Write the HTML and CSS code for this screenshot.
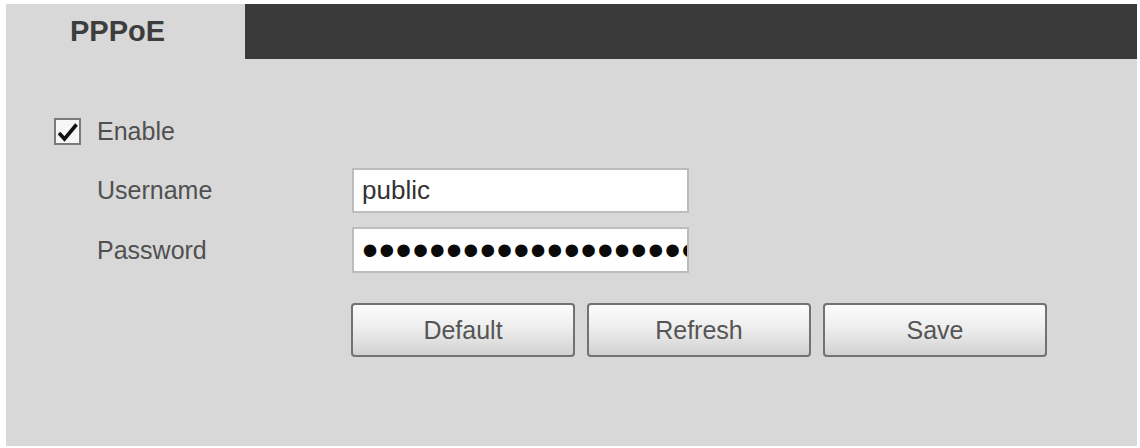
FILE: index.html
```html
<!DOCTYPE html>
<html>
<head>
<meta charset="utf-8">
<link rel="stylesheet" href="styles.css">
</head>
<body>
<div class="panel">
  <div class="tabs">
    <div class="tab">PPPoE</div>
    <div class="tab-bar"></div>
  </div>
  <div class="content">
    <label class="enable">
      <span class="check">
        <svg width="23" height="23" viewBox="0 0 23 23"><path d="M3 13 L8.5 19 L20.5 4.5" fill="none" stroke="#111" stroke-width="3.6" stroke-linejoin="miter" stroke-linecap="butt"/></svg>
      </span>
      <span class="enable-text">Enable</span>
    </label>
    <div class="fields">
      <div class="label">Username</div>
      <input class="field" type="text" value="public">
      <div class="label">Password</div>
      <input class="field pw" type="password" value="passwordpasswordpassword">
    </div>
    <div class="buttons">
      <button class="btn">Default</button>
      <button class="btn">Refresh</button>
      <button class="btn">Save</button>
    </div>
  </div>
</div>
</body>
</html>
```
FILE: styles.css
```css
html, body {
  margin: 0;
  padding: 0;
  background: #ffffff;
}
body {
  font-family: "Liberation Sans", Arial, sans-serif;
}
.panel {
  margin: 4px 0 0 6px;
  width: 1131px;
  height: 442px;
  background: #d8d8d8;
}
.tabs {
  display: flex;
  height: 55px;
}
.tab {
  width: 239px;
  box-sizing: border-box;
  padding-left: 64px;
  display: flex;
  align-items: center;
  font-size: 29px;
  font-weight: bold;
  color: #3d3d3d;
}
.tab-bar {
  flex: 1;
  background: #3a3a3a;
}
.content {
  padding: 59px 0 0 48px;
}
.enable {
  display: flex;
  align-items: center;
  gap: 16px;
  height: 27px;
}
.check {
  width: 23px;
  height: 23px;
  border: 2px solid #7a7a7a;
  background: #f6f6f6;
  display: flex;
}
.enable-text,
.label {
  font-size: 25px;
  color: #505050;
}
.fields {
  margin: 23px 0 0 43px;
  display: grid;
  grid-template-columns: 255px 337px;
  row-gap: 14px;
  align-items: center;
}
.field {
  box-sizing: border-box;
  width: 337px;
  height: 45px;
  margin: 0;
  border: 2px solid #bcbcbc;
  background: #ffffff;
  padding: 0 8px;
  font-family: "Liberation Sans", Arial, sans-serif;
  font-size: 26px;
  color: #333333;
  outline: none;
}
.pw {
  height: 46px;
  padding-right: 0;
  font-size: 46px;
  letter-spacing: 0.7px;
  color: #0a0a0a;
}
.buttons {
  margin: 30px 0 0 297px;
  display: flex;
  gap: 12px;
}
.btn {
  box-sizing: border-box;
  width: 224px;
  height: 54px;
  border: 2px solid #727272;
  border-radius: 4px;
  background: linear-gradient(#fcfcfc 0%, #eeeeee 45%, #d2d2d2 100%);
  font-family: "Liberation Sans", Arial, sans-serif;
  font-size: 25px;
  color: #555555;
  padding: 0;
}
```
